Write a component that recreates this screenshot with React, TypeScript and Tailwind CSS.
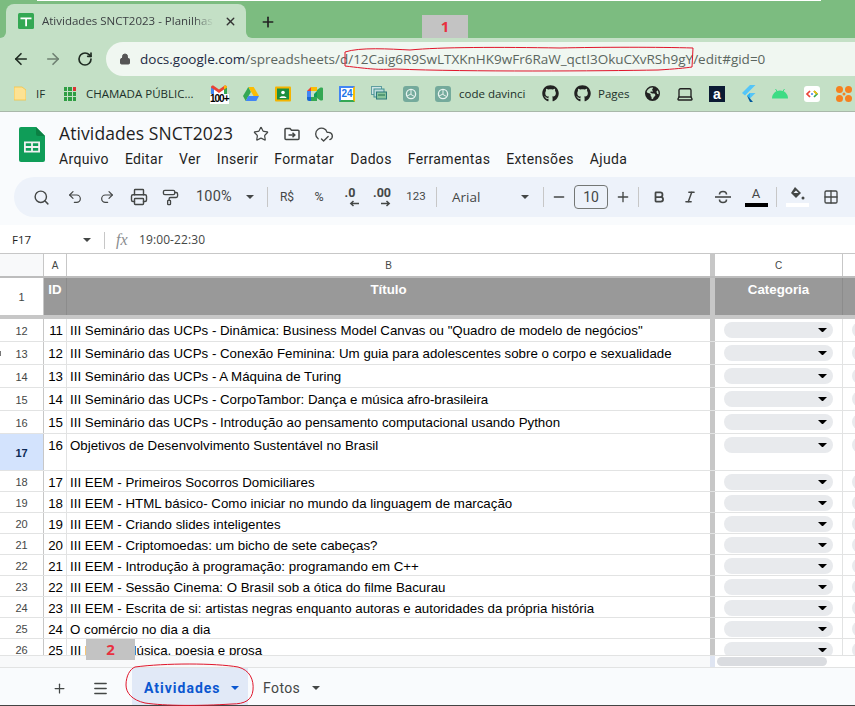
import React from "react";
import { FaGithub } from "react-icons/fa";
import { FaEarthAmericas } from "react-icons/fa6";
import { ArrowLeft, ArrowRight, RotateCw, Lock, X, Plus, Menu, Search, Undo2, Redo2, Printer, PaintRoller, Star, CloudCheck, Minus, Bold, Italic, Grid2x2, Laptop } from "lucide-react";

const rows: [string, string, string, number, boolean?][] = [
  ["12", "11", 'III Seminário das UCPs - Dinâmica: Business Model Canvas ou "Quadro de modelo de negócios"', 23],
  ["13", "12", "III Seminário das UCPs - Conexão Feminina: Um guia para adolescentes sobre o corpo e sexualidade", 23],
  ["14", "13", "III Seminário das UCPs - A Máquina de Turing", 23],
  ["15", "14", "III Seminário das UCPs - CorpoTambor: Dança e música afro-brasileira", 23],
  ["16", "15", "III Seminário das UCPs - Introdução ao pensamento computacional usando Python", 23],
  ["17", "16", "Objetivos de Desenvolvimento Sustentável no Brasil", 37, true],
  ["18", "17", "III EEM - Primeiros Socorros Domiciliares", 21],
  ["19", "18", "III EEM - HTML básico- Como iniciar no mundo da linguagem de marcação", 21],
  ["20", "19", "III EEM - Criando slides inteligentes", 21],
  ["21", "20", "III EEM - Criptomoedas: um bicho de sete cabeças?", 21],
  ["22", "21", "III EEM - Introdução à programação: programando em C++", 21],
  ["23", "22", "III EEM - Sessão Cinema: O Brasil sob a ótica do filme Bacurau", 21],
  ["24", "23", "III EEM - Escrita de si: artistas negras enquanto autoras e autoridades da própria história", 21],
  ["25", "24", "O comércio no dia a dia", 21],
  ["26", "25", "III EEM - Música, poesia e prosa", 21],
];

const Caret = ({ c = "#444746", w = 10 }: { c?: string; w?: number }) => (
  <svg width={w} height={w / 2} viewBox="0 0 10 5"><path d="M0 0h10L5 5z" fill={c} /></svg>
);

const Slot = ({ w, children }: { w: number; children?: React.ReactNode }) => (
  <div className="flex shrink-0 items-center justify-center" style={{ width: w }}>{children}</div>
);

const Sep = () => <div className="h-[20px] w-px shrink-0 bg-[#c7c7c7]" />;

const Pill = () => (
  <div className="flex h-[16px] w-[109px] items-center justify-end rounded-full bg-[#e8eaed] pr-[6px]">
    <Caret c="#000" w={9} />
  </div>
);

const Chat = () => (
  <svg width="16" height="16" viewBox="0 0 16 16">
    <rect width="16" height="16" rx="3" fill="#74aa9c" />
    <circle cx="8" cy="8" r="4.6" fill="none" stroke="#e8f3ef" strokeWidth="1.3" />
    <path d="M8 3.5v5l3.5 2M4 10l4-2" stroke="#e8f3ef" strokeWidth="1" fill="none" />
  </svg>
);

const Gmail = () => (
  <div className="relative h-[18px] w-[16px] overflow-visible">
    <svg width="16" height="11" viewBox="0 0 16 11" className="absolute left-0 top-0">
      <path d="M0 1.5L8 7l8-5.5V11H0z" fill="#fff" />
      <path d="M0 11V1.5l3 2V11z" fill="#4285f4" />
      <path d="M13 11V3.5l3-2V11z" fill="#34a853" />
      <path d="M0 2.5C0 .5 2 0 3 1l5 3.6L13 1c1-1 3-.5 3 1.5L13 4.6 8 8 3 4.6z" fill="#ea4335" />
      <path d="M13 1c1-1 3-.5 3 1.5L13 4.6z" fill="#fbbc04" />
    </svg>
    <span className="absolute left-[-1px] top-[9px] bg-white text-[10px] font-bold leading-[10px] tracking-[-1px] text-black [font-family:'Liberation_Sans',sans-serif]">100+</span>
  </div>
);

const Drive = () => (
  <svg width="16" height="14" viewBox="0 0 16 14">
    <path d="M5.3 0h5.4l5.3 9h-5.4z" fill="#fbbc04" />
    <path d="M5.3 0L0 9l2.7 5 5.2-9z" fill="#34a853" />
    <path d="M5.3 9H16l-2.7 5H2.7z" fill="#4285f4" />
  </svg>
);

const Classroom = () => (
  <svg width="16" height="16" viewBox="0 0 16 16">
    <rect width="16" height="15" y="0.5" rx="1" fill="#f4b400" />
    <rect x="2" y="2.5" width="12" height="11" fill="#1e8e3e" />
    <circle cx="8" cy="6.5" r="1.8" fill="#fff" />
    <path d="M4.5 12c0-2.5 7-2.5 7 0z" fill="#fff" />
  </svg>
);

const Meet = () => (
  <svg width="16" height="14" viewBox="0 0 16 14">
    <path d="M0 4l4-4h6v4H4v6H0z" fill="#ea4335" />
    <path d="M4 0h6v4H4z" fill="#fbbc04" />
    <path d="M0 10h4v4H2a2 2 0 01-2-2z" fill="#1967d2" />
    <path d="M4 10h6v4H4z" fill="#34a853" />
    <path d="M10 3l3-2.2c1-.6 3-.5 3 .7v11c0 1.200-2 1.300-3 .7L10 11z" fill="#34a853" />
    <path d="M10 4v6H7V7z" fill="#0f9d58" />
    <path d="M0 4h4v6H0z" fill="#4285f4" />
  </svg>
);

const Cal = () => (
  <div className="relative flex h-[16px] w-[16px] items-center justify-center rounded-[1px] border-[2px] border-[#4285f4] border-r-[#fbbc04] border-b-[#34a853] bg-white text-[10px] font-bold leading-none text-[#1a73e8] [font-family:'Liberation_Sans',sans-serif]">24</div>
);

const Stack = () => (
  <svg width="16" height="15" viewBox="0 0 16 15" fill="none">
    <rect x="0.5" y="0.5" width="10" height="8" stroke="#5f9ea0" fill="#cfe5e5" />
    <rect x="3" y="3" width="10" height="8" stroke="#3f8f8f" fill="#bcdcdc" />
    <rect x="5.500" y="6" width="10" height="7" stroke="#2c7a7b" fill="#87c49b" />
    <path d="M7 9h7" stroke="#1e6e4e" />
  </svg>
);

const Flutter = () => (
  <svg width="15" height="17" viewBox="0 0 15 17">
    <path d="M9 0h5.500L4 10.500 1 8z" fill="#54c5f8" />
    <path d="M9 8h5.500L9 13.500l-3-2.800z" fill="#54c5f8" />
    <path d="M6 10.700l3-2.700 0 5.500z" fill="#29b6f6" />
    <path d="M6 10.700l3 2.800L12 17H9z" fill="#01579b" />
  </svg>
);

const Android = () => (
  <svg width="16" height="10" viewBox="0 0 16 10">
    <path d="M0 9.500C0 5 3.500 1.500 8 1.500s8 3.500 8 8z" fill="#3ddc84" />
    <path d="M3.500 0l2 3M12.500 0l-2 3" stroke="#3ddc84" strokeWidth="1" />
  </svg>
);

const CodeIcon = () => (
  <svg width="16" height="16" viewBox="0 0 16 16">
    <rect width="16" height="16" rx="3" fill="#fff" />
    <path d="M6 5L3 8l3 3" stroke="#ea4335" strokeWidth="1.700" fill="none" />
    <path d="M10 5l3 3-3 3" stroke="#34a853" strokeWidth="1.700" fill="none" />
    <path d="M7 8h2" stroke="#4285f4" strokeWidth="1.700" />
    <path d="M10 5l3 3" stroke="#fbbc04" strokeWidth="1.700" />
  </svg>
);

const Orange = () => (
  <svg width="16" height="16" viewBox="0 0 16 16" fill="#f5811f">
    <circle cx="3.500" cy="3.500" r="3.500" />
    <circle cx="12.500" cy="3.500" r="3.500" />
    <circle cx="3.500" cy="12.500" r="3.500" />
    <circle cx="12.500" cy="12.500" r="3.500" />
    <circle cx="8" cy="8" r="1.500" />
  </svg>
);

const SheetsLogo = () => (
  <svg width="26" height="35" viewBox="0 0 26 35">
    <path d="M2 0h15l9 9v24a2 2 0 01-2 2H2a2 2 0 01-2-2V2a2 2 0 012-2z" fill="#0f9d58" />
    <path d="M17 0l9 9h-7a2 2 0 01-2-2z" fill="#0b8043" />
    <path d="M5 14.500h16v11H5zM6.800 16.200v2.900h5.300v-2.900zM13.900 16.200v2.900h5.300v-2.900zM6.800 20.900v2.900h5.300v-2.900zM13.900 20.900v2.900h5.300v-2.900z" fill="#f1f1f1" fillRule="evenodd" />
  </svg>
);

const stk = "#444746";

const ArrowDec = ({ right }: { right?: boolean }) => (
  <svg width="10" height="7" viewBox="0 0 10 7" fill="none" stroke={stk} strokeWidth="1.500">
    {right ? <path d="M0 3.500h8M5.500 1l2.700 2.500L5.500 6" /> : <path d="M10 3.500H2M4.500 1L1.800 3.500 4.500 6" />}
  </svg>
);

export default function App() {
  return (
    <div className="relative flex h-[706px] w-[855px] flex-col overflow-hidden bg-white [font-family:'Roboto',sans-serif]">
      {/* tab strip */}
      <div className="flex h-[38px] shrink-0 items-end bg-[#7cbc80] pl-[6px]">
        <div className="relative flex h-[34px] w-[240px] items-center rounded-t-[8px] bg-[#c4e0c6] pl-[12px]">
          <div className="absolute bottom-0 left-[-6px] h-[6px] w-[6px] bg-[#c4e0c6]"><div className="h-full w-full rounded-br-[6px] bg-[#7cbc80]" /></div>
          <div className="absolute bottom-0 right-[-6px] h-[6px] w-[6px] bg-[#c4e0c6]"><div className="h-full w-full rounded-bl-[6px] bg-[#7cbc80]" /></div>
          <svg width="16" height="16" viewBox="0 0 16 16" className="shrink-0">
            <rect width="16" height="16" rx="1.500" fill="#34a853" />
            <path d="M2.500 4.500h11v1.700H9v7H7.200v-7H2.500z" fill="#fff" />
          </svg>
          <span className="ml-[8px] w-[172px] overflow-hidden whitespace-nowrap text-[11.500px] text-[#3c4043] [font-family:'Open_Sans',sans-serif] [mask-image:linear-gradient(to_right,black_88%,transparent)]">Atividades SNCT2023 - Planilhas Google</span>
          <X size={13} strokeWidth={2.500} color="#333" className="ml-[10px] shrink-0" />
        </div>
        <Plus size={16} strokeWidth={2.500} color="#222" className="mb-[8px] ml-[14px]" />
      </div>

      {/* address row */}
      <div className="flex h-[38px] shrink-0 items-end bg-[#c4e0c6] pl-[12px]">
        <div className="mb-[8px] flex items-center">
          <ArrowLeft size={18} strokeWidth={2.200} color="#1f2b22" />
          <ArrowRight size={18} strokeWidth={2.200} color="#6f8072" className="ml-[14px]" />
          <RotateCw size={16} strokeWidth={2.500} color="#1f2b22" className="ml-[15px]" />
        </div>
        <div className="ml-[13px] flex h-[34px] flex-1 items-center rounded-l-full bg-[#f0f7f1] pl-[13px] text-[13.500px] [font-family:'Open_Sans',sans-serif]">
          <Lock size={12} fill="#555" color="#555" />
          <span className="ml-[9px] whitespace-nowrap text-[#5b6660]"><span className="text-[#1d2a44]">docs.google.com</span>/spreadsheets/d/12Caig6R9SwLTXKnHK9wFr6RaW_qctI3OkuCXvRSh9gY/edit#gid=0</span>
        </div>
      </div>

      {/* bookmarks */}
      <div className="flex h-[36px] shrink-0 items-center border-b-[1px] border-[#a9b8aa] bg-[#c4e0c6] pl-[14px] text-[11.500px] text-[#20302a] [font-family:'Open_Sans',sans-serif]">
        <svg width="12" height="15" viewBox="0 0 12 15" className="shrink-0"><path d="M0 1h8l4 3v10H0z" fill="#fde293" stroke="#f6c343" strokeWidth="0.800" /></svg>
        <span className="ml-[10px] w-[28px]">IF</span>
        <div className="grid h-[14px] w-[12px] shrink-0 grid-cols-3 gap-px">
          {["#2f9e44", "#2f9e44", "#d33", "#2f9e44", "#2f9e44", "#2f9e44", "#2f9e44", "#2f9e44", "#2f9e44"].map((c, i) => <div key={i} style={{ background: c }} />)}
        </div>
        <span className="ml-[10px] w-[125px] whitespace-nowrap">CHAMADA PÚBLIC...</span>
        <Slot w={16}><Gmail /></Slot>
        <div className="ml-[16px]"><Slot w={16}><Drive /></Slot></div>
        <div className="ml-[16px]"><Slot w={16}><Classroom /></Slot></div>
        <div className="ml-[16px]"><Slot w={16}><Meet /></Slot></div>
        <div className="ml-[16px]"><Slot w={16}><Cal /></Slot></div>
        <div className="ml-[16px]"><Slot w={16}><Stack /></Slot></div>
        <div className="ml-[16px]"><Slot w={16}><Chat /></Slot></div>
        <div className="ml-[16px]"><Slot w={16}><Chat /></Slot></div>
        <span className="ml-[8px] w-[83px] whitespace-nowrap">code davinci</span>
        <FaGithub size={17} color="#222" className="shrink-0" />
        <FaGithub size={17} color="#222" className="ml-[15px] shrink-0" />
        <span className="ml-[7px] w-[47px]">Pages</span>
        <FaEarthAmericas size={15} color="#222" className="shrink-0" />
        <Laptop size={18} color="#222" strokeWidth={1.800} className="ml-[16px] shrink-0" />
        <div className="ml-[15px] flex h-[16px] w-[16px] shrink-0 items-center justify-center bg-[#0b1a33] text-[14px] font-bold leading-none text-white [font-family:'Liberation_Sans',sans-serif]">a</div>
        <div className="ml-[16px] shrink-0"><Flutter /></div>
        <div className="ml-[16px] shrink-0"><Android /></div>
        <div className="ml-[16px] shrink-0"><CodeIcon /></div>
        <div className="ml-[16px] shrink-0"><Orange /></div>
      </div>

      {/* docs header */}
      <div className="h-[113px] shrink-0 bg-[#f9fbfd]">
        <div className="flex h-[65px]">
          <div className="ml-[19px] mt-[15px]"><SheetsLogo /></div>
          <div className="ml-[14px] mt-[10px]">
            <div className="flex h-[24px] items-center">
              <span className="text-[17.500px] leading-none tracking-[0.1px] text-[#1f1f1f] [font-family:'Open_Sans',sans-serif]">Atividades SNCT2023</span>
              <Star size={16} strokeWidth={1.800} color={stk} className="ml-[20px]" />
              <svg width="16" height="14" viewBox="0 0 16 14" fill="none" stroke={stk} strokeWidth="1.500" className="ml-[15px]">
                <path d="M1 2.500a1 1 0 011-1h4l1.500 1.700H14a1 1 0 011 1v7.300a1 1 0 01-1 1H2a1 1 0 01-1-1z" />
                <path d="M4.500 8h6M8.500 5.800L10.800 8l-2.300 2.200" />
              </svg>
              <CloudCheck size={20} strokeWidth={1.600} color={stk} className="ml-[14px]" />
            </div>
            <div className="mt-[3px] flex gap-[16px] whitespace-nowrap text-[14px] leading-[20px] tracking-[0.34px] text-[#1f1f1f]">
              <span>Arquivo</span><span>Editar</span><span>Ver</span><span>Inserir</span><span>Formatar</span><span>Dados</span><span>Ferramentas</span><span>Extensões</span><span>Ajuda</span>
            </div>
          </div>
        </div>
        <div className="ml-[14px] flex h-[40px] items-center rounded-l-full bg-[#edf2fa] text-[#444746]">
          <div className="w-[13px] shrink-0" />
          <Slot w={28}><Search size={17} strokeWidth={2} color={stk} /></Slot>
          <div className="w-[4px] shrink-0" />
          <Slot w={32}><Undo2 size={16} strokeWidth={1.800} color={stk} /></Slot>
          <Slot w={32}><Redo2 size={16} strokeWidth={1.800} color={stk} /></Slot>
          <Slot w={32}><Printer size={18} strokeWidth={1.900} color={stk} /></Slot>
          <Slot w={30}><PaintRoller size={17} strokeWidth={1.900} color={stk} /></Slot>
          <span className="ml-[11px] w-[46px] text-[14.500px] tracking-[0.2px]">100%</span>
          <Slot w={16}><Caret w={8} /></Slot>
          <div className="w-[9px] shrink-0" />
          <Sep />
          <Slot w={38}><span className="text-[12px]">R$</span></Slot>
          <Slot w={26}><span className="text-[12.500px]">%</span></Slot>
          <Slot w={36}>
            <div className="flex flex-col items-center">
              <span className="text-[12.500px] font-bold leading-[12px]">.0</span>
              <span className="ml-[8px] mt-[1px]"><ArrowDec /></span>
            </div>
          </Slot>
          <Slot w={28}>
            <div className="flex flex-col items-center">
              <span className="text-[12.500px] font-bold leading-[12px]">.00</span>
              <span className="ml-[8px] mt-[1px]"><ArrowDec right /></span>
            </div>
          </Slot>
          <Slot w={40}><span className="text-[11.500px]">123</span></Slot>
          <Sep />
          <span className="ml-[15px] w-[66px] text-[13.500px] [font-family:'Open_Sans',sans-serif]">Arial</span>
          <Slot w={14}><Caret w={8} /></Slot>
          <div className="w-[11px] shrink-0" />
          <Sep />
          <Slot w={30}><Minus size={16} strokeWidth={2} color={stk} /></Slot>
          <div className="flex h-[24px] w-[34px] shrink-0 items-center justify-center rounded-[4px] border border-[#747775] text-[14px]">10</div>
          <Slot w={30}><Plus size={16} strokeWidth={2} color={stk} /></Slot>
          <Sep />
          <Slot w={40}><Bold size={14} strokeWidth={3} color={stk} /></Slot>
          <Slot w={22}><Italic size={14} strokeWidth={2.500} color={stk} /></Slot>
          <Slot w={44}>
            <svg width="16" height="14" viewBox="0 0 16 14" fill="none" stroke={stk} strokeWidth="1.600">
              <path d="M0 7h16" />
              <path d="M4.500 4.500C4.500 2.500 6 1.500 8 1.500s3.500 1 3.500 3M4.500 9.500c0 2 1.500 3 3.500 3s3.500-1 3.500-3" />
            </svg>
          </Slot>
          <Slot w={22}>
            <div className="flex flex-col items-center">
              <span className="text-[13px] leading-[14px]">A</span>
              <div className="mt-[2px] h-[4px] w-[23px] bg-black" />
            </div>
          </Slot>
          <div className="w-[9px] shrink-0" />
          <Sep />
          <Slot w={40}>
            <div className="flex flex-col items-center">
              <svg width="15" height="14" viewBox="0 0 15 14"><path d="M5 0l6 6-5 5-5-5z" fill="#444746" /><path d="M3.500 6L6 3.500 8.500 6z" fill="#edf2fa" /><circle cx="13" cy="11" r="1.500" fill="#444746" /></svg>
              <div className="mt-[2px] h-[4px] w-[23px] bg-white" />
            </div>
          </Slot>
          <Slot w={28}><Grid2x2 size={16} strokeWidth={2} color={stk} /></Slot>
        </div>
        <div className="h-[8px]" />
      </div>

      {/* formula bar */}
      <div className="flex h-[29px] shrink-0 items-center border-b border-[#c7c7c7] bg-white pl-[12px] pt-[2px] text-[12px] text-[#1f1f1f]">
        <span className="w-[71px] text-[11.500px] [font-family:'Open_Sans',sans-serif]">F17</span>
        <Caret w={8} />
        <div className="ml-[13px] h-[17px] w-px bg-[#c7c7c7]" />
        <span className="ml-[11px] w-[14px] text-[16px] italic leading-none text-[#8a8d8f] [font-family:'Liberation_Serif',serif]">fx</span>
        <span className="ml-[9px] text-[12px] tracking-[0.1px] text-[#444746] [font-family:'Open_Sans',sans-serif]">19:00-22:30</span>
      </div>

      {/* grid */}
      <div className="h-[401px] shrink-0 overflow-hidden [font-family:'Liberation_Sans',sans-serif]">
        <div className="flex h-[24px] border-b-[2px] border-[#bdbdbd] text-[10px] text-[#444746]">
          <div className="w-[44px] shrink-0 border-r border-[#c7c7c7] bg-[#f8f9fa]" />
          <div className="flex w-[23px] shrink-0 items-center justify-center border-r border-[#c7c7c7]">A</div>
          <div className="flex w-[643px] shrink-0 items-center justify-center">B</div>
          <div className="w-[5px] shrink-0 bg-[#c7c7c7]" />
          <div className="flex w-[128px] shrink-0 items-center justify-center border-r border-[#c7c7c7]">C</div>
        </div>
        <div className="flex h-[37px] bg-[#999999] text-[13.300px] font-bold leading-[23px] text-white">
          <div className="flex w-[44px] shrink-0 items-center justify-center border-r border-[#c7c7c7] bg-white pt-[1px] text-[11px] font-normal text-[#444746]">1</div>
          <div className="w-[23px] shrink-0 border-r border-[#8c8c8c] text-center">ID</div>
          <div className="w-[643px] shrink-0 text-center">Título</div>
          <div className="w-[5px] shrink-0 bg-[#c7c7c7]" />
          <div className="w-[128px] shrink-0 border-r border-[#8c8c8c] text-center">Categoria</div>
          <div className="flex-1" />
        </div>
        <div className="h-[4px] bg-[#c7c7c7]" />
        {rows.map(([n, id, t, h, sel]) => (
          <div key={n} className="flex border-b border-[#e2e3e3] text-[13.300px] text-black" style={{ height: h }}>
            <div className={sel ? "flex w-[44px] shrink-0 items-center justify-center border-r border-[#c7c7c7] bg-[#d3e3fd] pt-[2px] text-[11px] font-bold text-[#0b2a55]" : "flex w-[44px] shrink-0 items-center justify-center border-r border-[#c7c7c7] pt-[2px] text-[11px] text-[#444746]"}>{n}</div>
            <div className="flex h-[23px] w-[22px] shrink-0 items-center justify-end pr-[3px]">{id}</div>
            <div className="h-full w-px shrink-0 bg-[#e2e3e3]" />
            <div className="flex h-[23px] w-[643px] shrink-0 items-center whitespace-nowrap pl-[3px]">{t}</div>
            <div className="h-full w-[5px] shrink-0 bg-[#c7c7c7]" />
            <div className="w-[128px] shrink-0 border-r border-[#e2e3e3] pl-[9px] pt-[3px]"><Pill /></div>
            <div className="flex-1 overflow-hidden pl-[9px] pt-[3px]"><div className="h-[16px] w-[40px] rounded-full bg-[#e8eaed]" /></div>
          </div>
        ))}
      </div>

      {/* horizontal scroll */}
      <div className="flex h-[13px] shrink-0 items-center border-b border-t border-[#e2e3e3] bg-white">
        <div className="h-full w-[710px] bg-[#f8f9fa]" />
        <div className="h-full w-[5px] bg-[#dfe5f2]" />
        <div className="ml-[2px] h-[9px] w-[110px] rounded-full bg-[#dadce0]" />
      </div>

      {/* sheets tabs */}
      <div className="flex flex-1 items-stretch border-b-[1px] border-[#444] bg-[#f9fbfd] text-[14px] text-[#444746]">
        <Plus size={15} strokeWidth={2} color={stk} className="ml-[52px] mt-[13px]" />
        <Menu size={17} strokeWidth={2} color={stk} className="ml-[25px] mt-[12px]" />
        <div className="ml-[23px] flex w-[116px] items-center bg-[#e1e9f7] pl-[12px] pt-[3px] font-bold tracking-[1px] text-[#0b57d0]">
          Atividades
          <span className="ml-[10px]"><Caret c="#0b57d0" w={8} /></span>
        </div>
        <div className="ml-[15px] flex items-center pt-[3px] tracking-[0.4px]">
          Fotos
          <span className="ml-[12px]"><Caret w={8} /></span>
        </div>
      </div>

      {/* overlays */}
      <div className="absolute left-[37px] top-0 h-px w-[784px] bg-white" />
      <div className="absolute left-0 top-[351px] h-[5px] w-px bg-[#777]" />
      <div className="absolute left-[422px] top-[15px] flex h-[23px] w-[46px] items-center justify-center bg-[#c3c3c3] text-[15px] font-bold text-[#e8303f] [font-family:'Open_Sans',sans-serif]">1</div>
      <div className="absolute left-[86px] top-[639px] flex h-[21px] w-[49px] items-center justify-center bg-[#c3c3c3] text-[15px] font-bold text-[#e8303f] [font-family:'Open_Sans',sans-serif]">2</div>
      <svg className="absolute left-0 top-0" width="855" height="706" fill="none" stroke="#e0162b" strokeWidth="1">
        <path d="M345 52 L345 66 C 370 69 378 70 395 69 C 470 72 600 71 658 70 C 675 69 685 68 692 67 L 693 48 C 660 47 600 47 560 48 C 500 47 440 47 410 50 C 390 49 360 47 345 52 Z" />
        <path d="M135 667 C 165 663 215 663 238 667 C 250 670 254 680 253 690 C 252 700 245 704 232 704 C 200 706 165 706 145 703 C 132 700 126 693 126 685 C 126 676 130 669 135 667 Z" />
      </svg>
    </div>
  );
}
